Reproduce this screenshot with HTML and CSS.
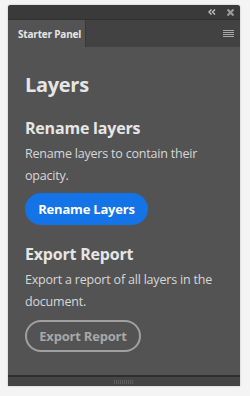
FILE: index.html
```html
<!DOCTYPE html>
<html>
<head>
<meta charset="utf-8">
<link rel="stylesheet" href="styles.css">
</head>
<body>
<div class="panel">
  <div class="titlebar">
    <svg class="ico-collapse" width="8" height="6" viewBox="0 0 8 6"><path d="M3.5 0.5 L1 3 L3.5 5.5 M7 0.5 L4.5 3 L7 5.5" fill="none" stroke="#c8c8c8" stroke-width="1.3"/></svg>
    <svg class="ico-close" width="7" height="7" viewBox="0 0 7 7"><path d="M0.5 0.5 L6.5 6.5 M6.5 0.5 L0.5 6.5" stroke="#9a9a9a" stroke-width="2.2"/></svg>
  </div>
  <div class="tabbar">
    <div class="tab">Starter Panel</div>
    <svg class="ico-menu" width="11" height="8" viewBox="0 0 11 8"><path d="M0 0.5H11M0 2.5H11M0 4.5H11M0 6.5H11" stroke="#a8a8a8" stroke-width="1"/></svg>
  </div>
  <div class="content">
    <h1 class="title">Layers</h1>
    <h2 class="heading">Rename layers</h2>
    <p class="desc">Rename layers to contain their opacity.</p>
    <button class="btn btn-primary">Rename Layers</button>
    <h2 class="heading heading-2">Export Report</h2>
    <p class="desc">Export a report of all layers in the document.</p>
    <button class="btn btn-secondary">Export Report</button>
  </div>
  <div class="footer">
    <div class="grip"></div>
  </div>
</div>
</body>
</html>
```
FILE: styles.css
```css
html, body { margin: 0; padding: 0; }
body {
  background: #f4f4f4;
  width: 250px;
  height: 396px;
  overflow: hidden;
  font-family: "Open Sans", "Noto Sans", sans-serif;
}
.panel {
  margin: 5px 0 0 8px;
  width: 232px;
  height: 381px;
  display: flex;
  flex-direction: column;
  background: #535353;
  box-shadow: 0 0 2px rgba(0,0,0,0.25);
  border-radius: 3px 3px 0 0;
  overflow: hidden;
}
.titlebar {
  height: 14px;
  background: #3a3a3a;
  display: flex;
  align-items: center;
  justify-content: flex-end;
  gap: 11px;
  padding-right: 6px;
}
.ico-collapse { display: block; }
.ico-close { display: block; }
.tabbar {
  height: 28px;
  background: #424242;
  border-top: 1px solid #303030;
  box-sizing: border-box;
  display: flex;
  align-items: stretch;
  justify-content: space-between;
}
.tab {
  width: 78px;
  background: #535353;
  color: #e6e6e6;
  font-size: 10px;
  font-weight: 700;
  white-space: nowrap;
  display: flex;
  align-items: center;
  padding-left: 10px;
  box-sizing: border-box;
  border-right: 1px solid #383838;
  letter-spacing: -0.2px;
}
.ico-menu { align-self: center; margin-right: 6px; }
.content {
  flex: 1;
  padding: 0 10px 0 17px;
  color: #e6e6e6;
}
.title {
  margin: 24px 0 0 0;
  font-size: 20px;
  font-weight: 700;
  line-height: 28px;
  letter-spacing: -0.3px;
}
.heading {
  margin: 18px 0 0 0;
  font-size: 16px;
  font-weight: 700;
  line-height: 22px;
  letter-spacing: -0.2px;
}
.heading-2 { margin-top: 18px; }
.desc {
  margin: 4px 0 0 0;
  font-size: 12.5px;
  line-height: 22px;
  color: #d8d8d8;
  letter-spacing: -0.2px;
}
.btn {
  display: block;
  font-family: inherit;
  font-size: 13px;
  font-weight: 700;
  white-space: nowrap;
  height: 32px;
  border-radius: 16px;
  padding: 0;
  margin-top: 6px;
  letter-spacing: -0.2px;
  text-align: center;
}
.btn-primary {
  background: #1473e6;
  color: #ffffff;
  border: none;
  width: 123px;
}
.btn-secondary {
  background: transparent;
  color: #a8a8a8;
  border: 2px solid #a0a0a0;
  width: 116px;
  margin-top: 7px;
}
.footer {
  height: 9px;
  background: #454545;
  border-top: 2px solid #2e2e2e;
  display: flex;
  justify-content: center;
  align-items: center;
}
.grip {
  width: 20px;
  height: 4px;
  background: repeating-linear-gradient(90deg, #5e5e5e 0 1px, transparent 1px 2px);
}
```
